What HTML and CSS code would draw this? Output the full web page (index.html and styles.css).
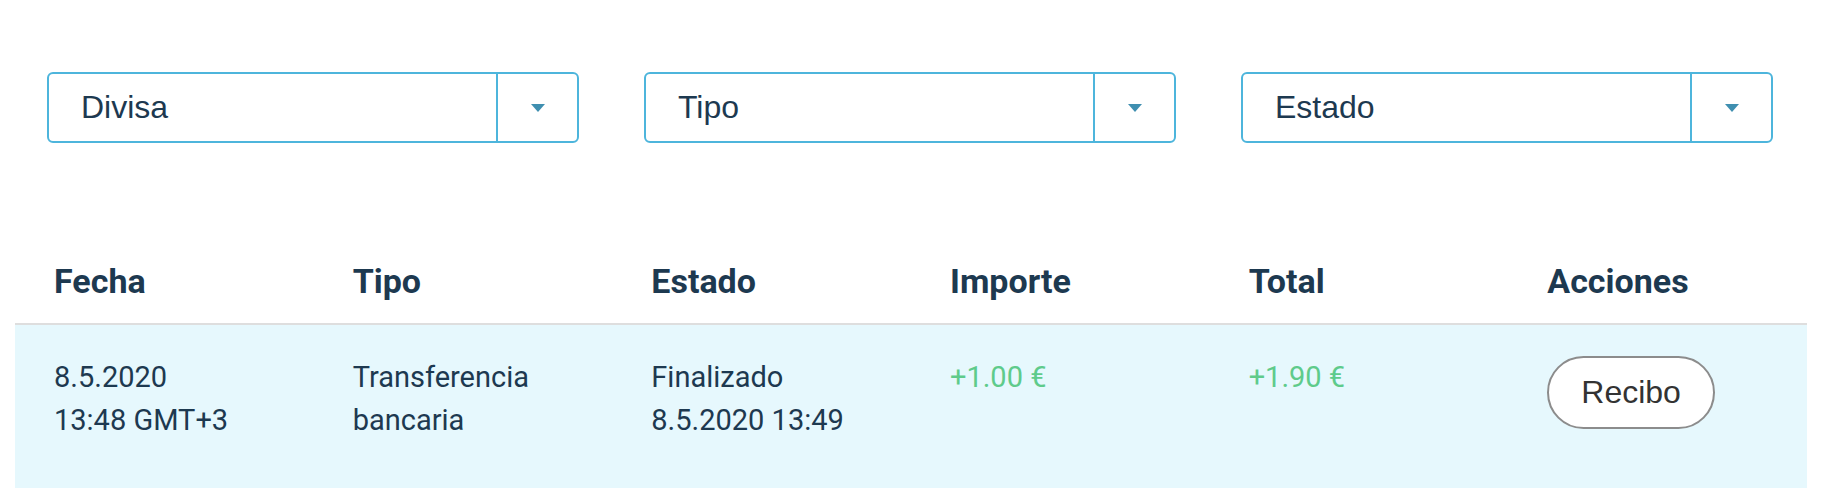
FILE: index.html
```html
<!DOCTYPE html>
<html lang="es">
<head>
<meta charset="utf-8">
<title>Transacciones</title>
<link rel="stylesheet" href="styles.css">
</head>
<body>
<div class="page">
  <div class="filters">
    <div class="select">
      <span class="select-label">Divisa</span>
      <span class="select-arrow"><svg width="14" height="8" viewBox="0 0 14 8"><path d="M0 0H14L7 8Z" fill="#3f8fb0"/></svg></span>
    </div>
    <div class="select">
      <span class="select-label">Tipo</span>
      <span class="select-arrow"><svg width="14" height="8" viewBox="0 0 14 8"><path d="M0 0H14L7 8Z" fill="#3f8fb0"/></svg></span>
    </div>
    <div class="select">
      <span class="select-label">Estado</span>
      <span class="select-arrow"><svg width="14" height="8" viewBox="0 0 14 8"><path d="M0 0H14L7 8Z" fill="#3f8fb0"/></svg></span>
    </div>
  </div>
  <table class="tx">
    <thead>
      <tr>
        <th>Fecha</th>
        <th>Tipo</th>
        <th>Estado</th>
        <th>Importe</th>
        <th>Total</th>
        <th>Acciones</th>
      </tr>
    </thead>
    <tbody>
      <tr>
        <td>8.5.2020<br>13:48 GMT+3</td>
        <td>Transferencia<br>bancaria</td>
        <td>Finalizado<br>8.5.2020 13:49</td>
        <td class="amount">+1.00 €</td>
        <td class="amount">+1.90 €</td>
        <td><button class="btn">Recibo</button></td>
      </tr>
    </tbody>
  </table>
</div>
</body>
</html>
```
FILE: styles.css
```css
html, body {
  margin: 0;
  padding: 0;
  background: #ffffff;
}
.page {
  width: 1792px;
  margin-left: 15px;
  padding-top: 72px;
}
.filters {
  display: grid;
  grid-template-columns: repeat(3, 532px);
  column-gap: 65px;
  padding-left: 32px;
}
.select {
  display: flex;
  height: 71px;
  box-sizing: border-box;
  border: 2px solid #4db5dc;
  border-radius: 6px;
  font-family: "Liberation Sans", Arial, sans-serif;
  font-size: 32px;
  color: #1d3950;
}
.select-label {
  flex: 1;
  display: flex;
  align-items: center;
  padding-left: 32px;
}
.select-arrow {
  width: 79px;
  border-left: 2px solid #4db5dc;
  display: flex;
  align-items: center;
  justify-content: center;
}
.select-arrow svg {
  display: block;
}
.tx {
  margin-top: 118px;
  width: 1792px;
  table-layout: fixed;
  border-collapse: collapse;
  font-family: Roboto, "Liberation Sans", sans-serif;
  color: #1d3950;
}
.tx th {
  text-align: left;
  font-weight: 700;
  font-size: 34px;
  line-height: 40px;
  padding: 0 0 22px 39px;
  border-bottom: 2px solid #dedede;
}
.tx td {
  background: #e6f8fd;
  vertical-align: top;
  font-size: 29px;
  line-height: 43px;
  padding: 31px 0 46px 39px;
}
.tx td.amount {
  color: #5ecb8b;
}
.btn {
  display: inline-block;
  height: 73px;
  padding: 0 32px;
  box-sizing: border-box;
  border: 2px solid #8c8c8c;
  border-radius: 37px;
  background: #ffffff;
  font-family: "Liberation Sans", Arial, sans-serif;
  font-size: 32px;
  color: #333333;
}
```
